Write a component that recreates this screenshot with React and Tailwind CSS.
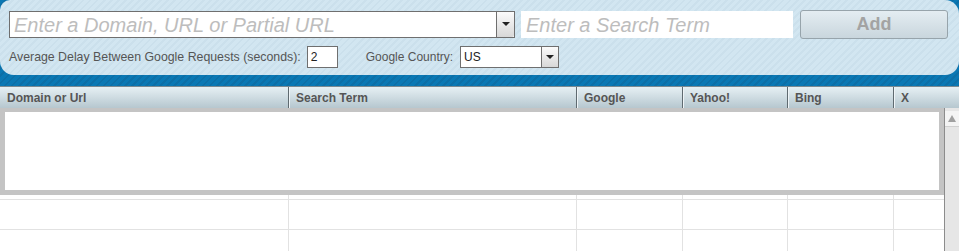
import React from "react";

const cols = [
  { w: 289, label: "Domain or Url" },
  { w: 288, label: "Search Term" },
  { w: 106, label: "Google" },
  { w: 105, label: "Yahoo!" },
  { w: 106, label: "Bing" },
  { w: 65, label: "X" },
];

function Arrow() {
  return (
    <svg width="8" height="5" viewBox="0 0 8 5">
      <path d="M0 0 L8 0 L4 4 Z" fill="#222" />
    </svg>
  );
}

function GridRow({ h, top }) {
  return (
    <div className={"flex shrink-0 overflow-hidden " + (top ? "border-t border-[#e2e2e2] " : "")} style={{ height: h }}>
      {cols.map((c, i) => (
        <div
          key={i}
          style={{ width: c.w }}
          className={"shrink-0 " + (i < cols.length - 1 ? "border-r border-[#e2e2e2]" : "")}
        />
      ))}
    </div>
  );
}

export default function App() {
  return (
    <div className="w-[959px] h-[251px] overflow-hidden bg-white font-['Liberation_Sans',Arial,sans-serif]">
      {/* top area */}
      <div className="h-[86px] bg-[repeating-linear-gradient(135deg,#0a78b4_0px,#0a78b4_3px,#0c6fa7_3px,#0c6fa7_5px)]">
        <div className="h-[75px] rounded-b-[14px] rounded-tr-[14px] rounded-tl-[10px] bg-[repeating-linear-gradient(135deg,#d2e6f1_0px,#d2e6f1_3px,#cbe0ec_3px,#cbe0ec_5px)] pl-[9px] pt-[10px]">
          <div className="flex items-center h-[29px]">
            <div className="flex w-[506px] h-[27px] border border-[#6f6f6f] bg-white">
              <div className="flex-1 flex items-center pl-[4px] text-[20px] italic text-[#bdbdbd] leading-none">
                Enter a Domain, URL or Partial URL
              </div>
              <div className="w-[18px] border-l border-[#6f6f6f] rounded-r-[2px] bg-gradient-to-b from-[#fbfbfb] to-[#d8d8d8] flex items-center justify-center">
                <Arrow />
              </div>
            </div>
            <div className="ml-[6px] w-[272px] h-[27px] bg-white flex items-center pl-[5px] text-[20px] italic text-[#bdbdbd] leading-none">
              Enter a Search Term
            </div>
            <div className="ml-[7px] w-[148px] h-[29px] rounded-[3px] border border-[#97a4ab] bg-gradient-to-b from-[#e4edf2] to-[#c9d6dd] flex items-center justify-center text-[18px] font-bold text-[#a3a3a3]">
              Add
            </div>
          </div>
          <div className="flex items-center mt-[7px] h-[22px] text-[12px] text-[#555]">
            <span className="text-[12.33px]">Average Delay Between Google Requests (seconds):</span>
            <div className="ml-[6px] w-[31px] h-[22px] border border-[#6f6f6f] bg-white flex items-center pl-[3px] text-[#222]">
              2
            </div>
            <span className="ml-[28px]">Google Country:</span>
            <div className="ml-[7px] flex w-[99px] h-[22px] border border-[#6f6f6f] bg-white">
              <div className="flex-1 flex items-center pl-[3px] text-[#222]">US</div>
              <div className="w-[17px] border-l border-[#6f6f6f] bg-gradient-to-b from-[#fbfbfb] to-[#d8d8d8] flex items-center justify-center">
                <Arrow />
              </div>
            </div>
          </div>
        </div>
      </div>

      {/* header */}
      <div className="flex h-[22px] border-t border-[#7a8a92] bg-gradient-to-b from-[#e6f0f4] to-[#b6c7cf]">
        {cols.map((c, i) => (
          <div
            key={c.label}
            style={{ width: c.w }}
            className={
              "shrink-0 flex items-center pl-[7px] text-[12px] font-bold text-[#555] " +
              (i < cols.length - 1 ? "border-r border-[#5f6a70] shadow-[1px_0_0_#eef4f7]" : "")
            }
          >
            {c.label}
          </div>
        ))}
        <div className="flex-1" />
      </div>

      {/* body */}
      <div className="flex h-[143px]">
        <div className="w-[944px] shrink-0 flex flex-col overflow-hidden">
          <div className="shrink-0 h-[87px] border-t-[4px] border-b-[5px] border-x-[5px] border-[#c4c4c4] bg-white" />
          <GridRow h={4} />
          <GridRow h={30} top />
          <GridRow h={30} top />
        </div>
        <div className="w-[15px] shrink-0 border-l border-[#8c8c8c] bg-[#e6e6e6] flex flex-col">
          <div className="h-[16px] mt-[3px] bg-[#f4f4f4] border-b border-[#d0d0d0] flex items-center justify-center">
            <svg width="8" height="7" viewBox="0 0 8 7">
              <path d="M4 0 L8 7 L0 7 Z" fill="#a0a0a0" />
            </svg>
          </div>
        </div>
      </div>
    </div>
  );
}
